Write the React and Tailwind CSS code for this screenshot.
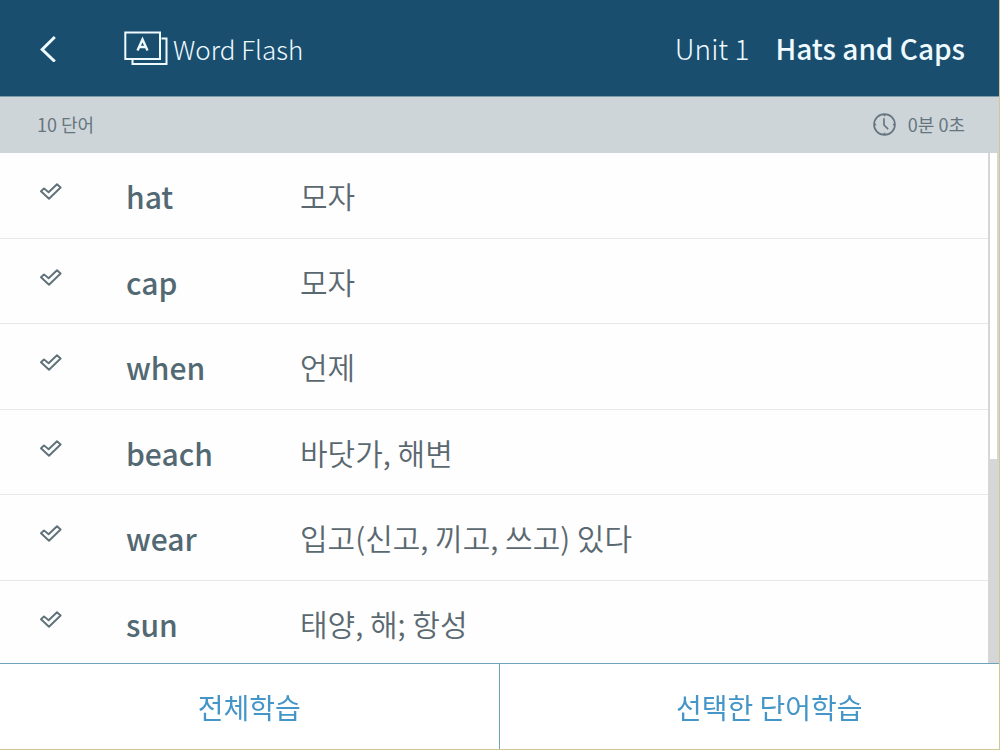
const words = [
  { en: 'hat', ko: '모자' },
  { en: 'cap', ko: '모자' },
  { en: 'when', ko: '언제' },
  { en: 'beach', ko: '바닷가, 해변' },
  { en: 'wear', ko: '입고(신고, 끼고, 쓰고) 있다' },
  { en: 'sun', ko: '태양, 해; 항성' },
];

function BackIcon() {
  return (
    <svg width="16" height="28" viewBox="0 0 16 28" fill="none" stroke="currentColor" strokeWidth="3" aria-hidden="true">
      <path d="M14.800 3 2.200 15.500l12.600 12" />
    </svg>
  );
}

function CardsIcon() {
  return (
    <svg width="44" height="35" viewBox="0 0 44 35" fill="none" stroke="currentColor" strokeWidth="2" aria-hidden="true">
      <path d="M1.300 1.500h34.700v26.500H1.300z" />
      <path d="M37.500 7.500h5v25.500H8.500v-4" />
      <path d="m13.500 19.500 5-11 5 11M15.300 16h6.400" strokeWidth="2.400" />
    </svg>
  );
}

function ClockIcon() {
  return (
    <svg width="23" height="23" viewBox="0 0 22 22" fill="none" stroke="currentColor" strokeWidth="1.6" aria-hidden="true">
      <circle cx="11" cy="11" r="10" />
      <path d="M10.500 5v6.500l4 4M11 1v2M11 19v2M1 11h2M19 11h2" />
    </svg>
  );
}

function CheckIcon() {
  return (
    <svg width="22" height="17" viewBox="0 0 22 17" fill="none" stroke="currentColor" strokeWidth="1.9" strokeLinejoin="round" aria-hidden="true">
      <path d="M1 8.300 4 5.400l4.600 3.900L17 1.200l3.600 3.300L9 15.800z" />
    </svg>
  );
}

function WordRow({ word }) {
  const id = `word-${word.en}`;
  return (
    <li className="flex items-center border-b border-[#e6e8e9] odd:h-[86px] even:h-[85px]">
      <label htmlFor={id} className="w-[126px] shrink-0 cursor-pointer pb-2 pl-10 text-[#5f7179]">
        <input id={id} type="checkbox" aria-label={word.en} className="peer sr-only" />
        <span className="block peer-checked:text-[#4596c8]">
          <CheckIcon />
        </span>
      </label>
      <span className="w-[174px] shrink-0 pt-0.5 text-[30px] font-medium text-[#526872]">{word.en}</span>
      <span className="text-[30px] font-[350] text-[#5a6870]">{word.ko}</span>
    </li>
  );
}

export default function App() {
  return (
    <div className="flex h-screen flex-col border-r border-b border-[#d2c596] bg-white font-['Noto_Sans_CJK_KR',sans-serif] leading-normal">
      <header className="flex h-24 shrink-0 items-center bg-[#194e6f] pr-[34px] pl-10 text-[#effaff]">
        <button type="button" aria-label="Back" className="w-[84px] cursor-pointer">
          <BackIcon />
        </button>
        <h1 className="flex items-center gap-[5px] text-[26px] font-light">
          <CardsIcon />
          Word Flash
        </h1>
        <p className="ml-auto flex gap-[26px] text-[28px]">
          <span className="font-light">Unit 1</span>
          <span className="font-medium">Hats and Caps</span>
        </p>
      </header>

      <div className="flex h-[57px] shrink-0 items-center justify-between border-t border-[#7e9bac] bg-[#ced5d9] pr-[34px] pb-px pl-[37px] text-[18px] text-[#65757f]">
        <span>10 단어</span>
        <span className="flex items-center gap-3">
          <ClockIcon />
          0분 0초
        </span>
      </div>

      <main className="flex min-h-0 flex-1">
        <ul className="min-w-0 flex-1 overflow-y-auto bg-[#fefefe] [scrollbar-width:none]">
          {words.map((word) => (
            <WordRow key={word.en} word={word} />
          ))}
        </ul>
        <div className="w-[11px] shrink-0 bg-[#d5d6d7] px-0.5" aria-hidden="true">
          <div className="h-3/5 bg-white" />
        </div>
      </main>

      <footer className="grid h-[86px] shrink-0 grid-cols-2 border-t border-[#6fa3bb] text-[28px] text-[#4596c8]">
        <button type="button" className="cursor-pointer border-r border-[#6fa3bb]">전체학습</button>
        <button type="button" className="cursor-pointer pl-10">선택한 단어학습</button>
      </footer>
    </div>
  );
}
